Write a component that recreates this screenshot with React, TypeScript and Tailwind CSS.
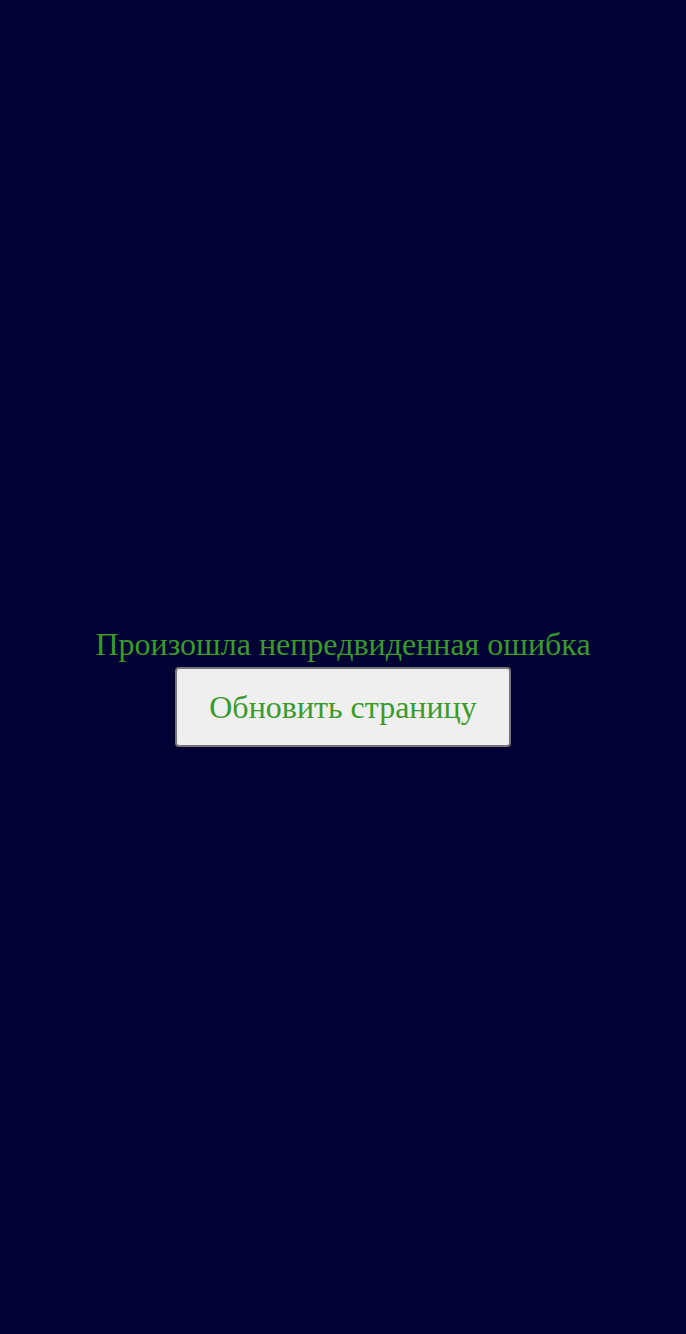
export default function App() {
  return (
    <div className="min-h-screen bg-[#020235] flex flex-col items-center justify-center pt-[38px] font-['Liberation_Serif',serif] text-[32px] text-[#3a9a2a]">
      <div className="leading-[37px]">Произошла непредвиденная ошибка</div>
      <button
        type="button"
        className="mt-[4px] px-[32px] py-[20px] leading-[36px] bg-[#efefef] border-2 border-[#767676] rounded-[4px] text-[#3a9a2a]"
      >
        Обновить страницу
      </button>
    </div>
  );
}
